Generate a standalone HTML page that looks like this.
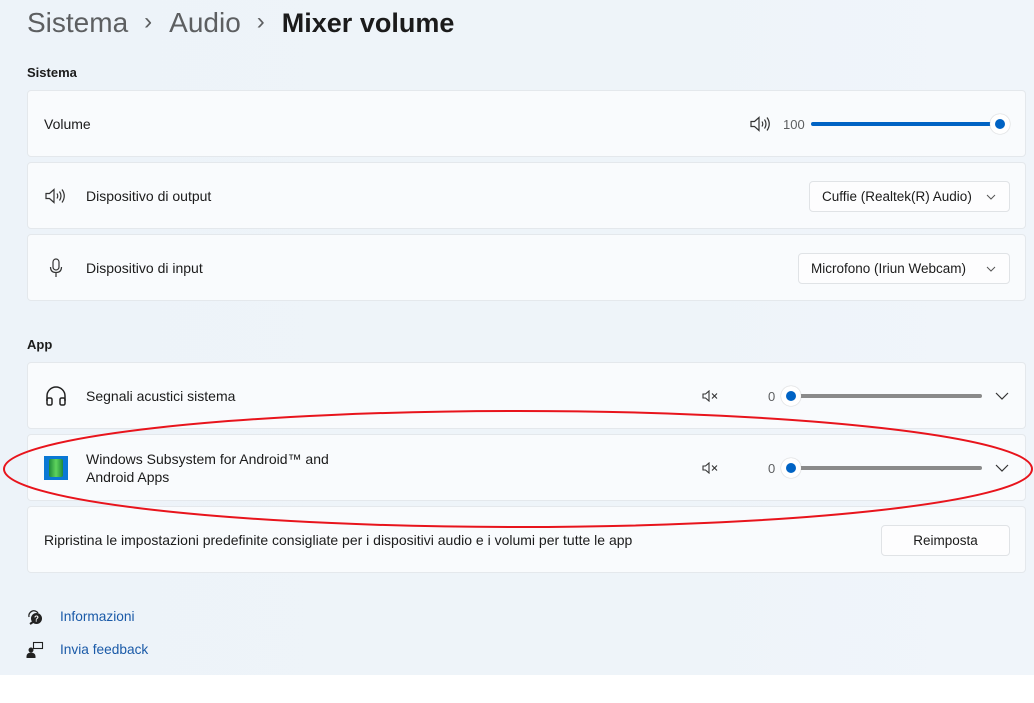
<!DOCTYPE html>
<html><head><meta charset="utf-8"><style>
*{box-sizing:border-box;margin:0;padding:0}
body{width:1034px;height:703px;background:#fff;font-family:"Liberation Sans",sans-serif;color:#1b1b1b;position:relative;overflow:hidden}
.bg{position:absolute;left:0;top:0;width:1034px;height:675px;background:linear-gradient(90deg,#edf3f9,#eef4f9 60%,#f0f5fa)}
.t{position:absolute;top:7px;left:27px;font-size:28px;white-space:nowrap}
.t .g{color:#5d5f61}.t .s{color:#5d5f61;font-size:24px;margin:0 17px 0 16px;position:relative;top:-3px}
.t b{font-weight:600;color:#1b1b1b;font-size:27px}
.h{position:absolute;left:27px;font-size:13px;font-weight:600}
.c{position:absolute;left:27px;width:999px;height:67px;background:#f9fbfd;border:1px solid #e4e8ec;border-radius:4px}
.l{position:absolute;font-size:14px;top:50%;transform:translateY(-50%);line-height:18px}
.ic{position:absolute;top:50%;transform:translateY(-50%)}
.dd{position:absolute;top:18px;height:31px;background:#fdfdfe;border:1px solid #e0e3e6;border-radius:4px;font-size:13.5px;padding:7px 0 0 12px}
.dd svg{position:absolute;right:13px;top:12px}
.tr{position:absolute;height:4px;border-radius:2px}
.th{position:absolute;width:20px;height:20px;border-radius:50%;background:#fff;box-shadow:0 0 1px #999}
.th:after{content:"";position:absolute;left:5px;top:5px;width:10px;height:10px;border-radius:50%;background:#0063c4}
.num{position:absolute;font-size:13px;color:#5d5f61}
.lk{position:absolute;left:60px;font-size:13.7px;color:#1a5aa8}
</style></head><body>
<div class="bg"></div>
<div class="t"><span class="g">Sistema</span><span class="s">›</span><span class="g">Audio</span><span class="s">›</span><b>Mixer volume</b></div>
<div class="h" style="top:65px">Sistema</div>
<div class="c" style="top:90px"><div class="l" style="left:16px">Volume</div>
<svg class="ic" style="left:722px" width="22" height="16" viewBox="0 0 22 16" fill="none" stroke="#333" stroke-width="1.2"><path d="M1 5.5h3.5L9 1.5v13L4.5 10.5H1z"/><path d="M12 5.5q1.5 2.5 0 5M14.5 3.5q3 4.5 0 9M17 1.5q4.5 6.5 0 13"/></svg>
<div class="num" style="left:755px;top:26px">100</div>
<div class="tr" style="left:783px;top:31px;width:185px;background:#0063c4"></div>
<div class="th" style="left:962px;top:23px"></div></div>
<div class="c" style="top:162px">
<svg class="ic" style="left:17px" width="22" height="16" viewBox="0 0 22 16" fill="none" stroke="#333" stroke-width="1.2"><path d="M1 5.5h3.5L9 1.5v13L4.5 10.5H1z"/><path d="M12 5.5q1.5 2.5 0 5M14.5 3.5q3 4.5 0 9M17 1.5q4.5 6.5 0 13"/></svg>
<div class="l" style="left:58px">Dispositivo di output</div>
<div class="dd" style="left:781px;width:201px">Cuffie (Realtek(R) Audio)<svg width="10" height="6" viewBox="0 0 10 6"><path d="M1 1l4 4 4-4" fill="none" stroke="#555"/></svg></div></div>
<div class="c" style="top:234px">
<svg class="ic" style="left:21px" width="14" height="20" viewBox="0 0 14 20" fill="none" stroke="#333" stroke-width="1.2"><rect x="4" y="1" width="6" height="11" rx="3"/><path d="M1.5 9q0 5.5 5.5 5.5T12.5 9M7 14.5V19"/></svg>
<div class="l" style="left:58px">Dispositivo di input</div>
<div class="dd" style="left:770px;width:212px">Microfono (Iriun Webcam)<svg width="10" height="6" viewBox="0 0 10 6"><path d="M1 1l4 4 4-4" fill="none" stroke="#555"/></svg></div></div>
<div class="h" style="top:337px">App</div>
<div class="c" style="top:362px">
<svg class="ic" style="left:17px" width="22" height="22" viewBox="0 0 22 22" fill="none" stroke="#222" stroke-width="1.5"><path d="M2 16v-5a9 9 0 0 1 18 0v5"/><rect x="2" y="13" width="5" height="7" rx="1.5"/><rect x="15" y="13" width="5" height="7" rx="1.5"/></svg>
<div class="l" style="left:58px">Segnali acustici sistema</div>
<svg class="ic" style="left:674px" width="18" height="12" viewBox="0 0 18 12" fill="none" stroke="#333" stroke-width="1.1"><path d="M1 4h2.5L7 1v10L3.5 8H1z"/><path d="M10 3.5l5 5M15 3.5l-5 5"/></svg>
<div class="num" style="left:740px;top:26px">0</div>
<div class="tr" style="left:764px;top:31px;width:190px;background:#8a8a8a"></div>
<div class="th" style="left:753px;top:23px"></div>
<svg style="position:absolute;left:967px;top:29px" width="14" height="8" viewBox="0 0 14 8"><path d="M1 1l6 6 6-6" fill="none" stroke="#333" stroke-width="1.2"/></svg></div>
<div class="c" style="top:434px">
<div style="position:absolute;left:16px;top:21px;width:24px;height:24px;background:#0a78d4"><div style="position:absolute;left:5px;top:3px;width:14px;height:18px;background:linear-gradient(90deg,#1d8a3a,#5fd35c 50%,#1d8a3a);border-radius:2px"></div></div>
<div class="l" style="left:58px">Windows Subsystem for Android™ and<br>Android Apps</div>
<svg class="ic" style="left:674px" width="18" height="12" viewBox="0 0 18 12" fill="none" stroke="#333" stroke-width="1.1"><path d="M1 4h2.5L7 1v10L3.5 8H1z"/><path d="M10 3.5l5 5M15 3.5l-5 5"/></svg>
<div class="num" style="left:740px;top:26px">0</div>
<div class="tr" style="left:764px;top:31px;width:190px;background:#8a8a8a"></div>
<div class="th" style="left:753px;top:23px"></div>
<svg style="position:absolute;left:967px;top:29px" width="14" height="8" viewBox="0 0 14 8"><path d="M1 1l6 6 6-6" fill="none" stroke="#333" stroke-width="1.2"/></svg></div>
<div class="c" style="top:506px">
<div class="l" style="left:16px">Ripristina le impostazioni predefinite consigliate per i dispositivi audio e i volumi per tutte le app</div>
<div class="dd" style="left:853px;width:129px;top:18px;padding:7px 0 0 0;text-align:center">Reimposta</div></div>
<svg style="position:absolute;left:26px;top:608px" width="18" height="18" viewBox="0 0 18 18"><path d="M3 9a5 5 0 0 1 9-4" fill="none" stroke="#222" stroke-width="1.3"/><circle cx="10.5" cy="10.5" r="5.5" fill="#222"/><path d="M4 16l3-2" stroke="#222" stroke-width="2"/><text x="10.5" y="13.5" font-size="8" fill="#fff" text-anchor="middle" font-family="Liberation Sans" font-weight="bold">?</text></svg>
<div class="lk" style="top:609px">Informazioni</div>
<svg style="position:absolute;left:26px;top:641px" width="18" height="18" viewBox="0 0 18 18"><rect x="7.5" y="1.5" width="9" height="6" fill="none" stroke="#222" stroke-width="1.1"/><circle cx="5" cy="9" r="2.5" fill="#222"/><path d="M0.5 17v-2a4.5 3.5 0 0 1 9 0v2z" fill="#222"/></svg>
<div class="lk" style="top:642px">Invia feedback</div>
<svg style="position:absolute;left:0;top:0" width="1034" height="703"><ellipse cx="518" cy="469" rx="514" ry="58" fill="none" stroke="#e8141c" stroke-width="2"/></svg>
</body></html>
